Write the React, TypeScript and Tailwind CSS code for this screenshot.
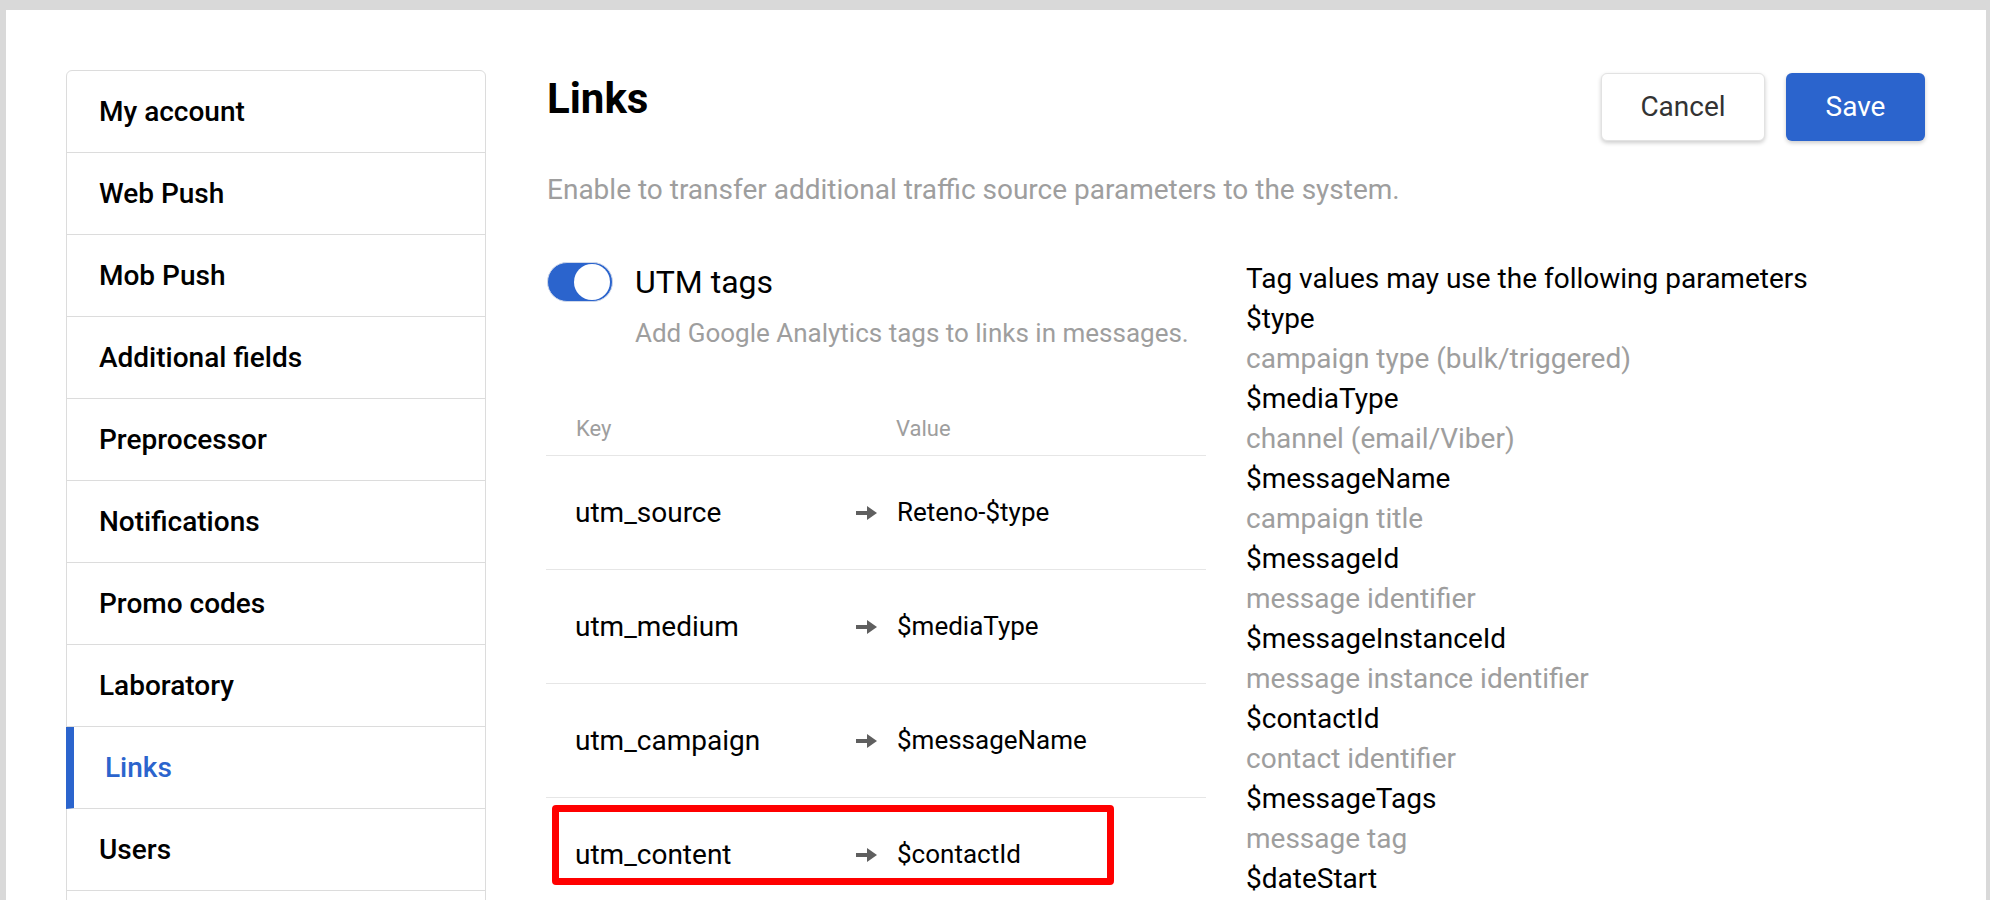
import React from "react";

const navItems = [
  "My account",
  "Web Push",
  "Mob Push",
  "Additional fields",
  "Preprocessor",
  "Notifications",
  "Promo codes",
  "Laboratory",
  "Links",
  "Users",
  "",
];

const rows = [
  { key: "utm_source", value: "Reteno-$type" },
  { key: "utm_medium", value: "$mediaType" },
  { key: "utm_campaign", value: "$messageName" },
  { key: "utm_content", value: "$contactId", marked: true },
];

const params: [string, string | null][] = [
  ["$type", "campaign type (bulk/triggered)"],
  ["$mediaType", "channel (email/Viber)"],
  ["$messageName", "campaign title"],
  ["$messageId", "message identifier"],
  ["$messageInstanceId", "message instance identifier"],
  ["$contactId", "contact identifier"],
  ["$messageTags", "message tag"],
  ["$dateStart", null],
];

function Arrow() {
  return (
    <svg width="22" height="16" viewBox="0 0 22 16" className="shrink-0">
      <rect x="0" y="6" width="12" height="4" fill="#5f5f5f" />
      <polygon points="11,1 21,8 11,15" fill="#5f5f5f" />
    </svg>
  );
}

export default function App() {
  return (
    <div
      className="h-[900px] w-[1990px] overflow-hidden bg-[#d9d9d9] pt-[10px] pl-[6px] pr-[4px]"
      style={{ fontFamily: "Roboto, 'Liberation Sans', sans-serif" }}
    >
      <div className="flex h-full bg-white pl-[60px] pt-[60px] pr-[61px]">
        {/* Sidebar */}
        <div className="w-[420px] shrink-0 self-start rounded-t-[6px] border border-[#dcdcdc]">
          {navItems.map((item, i) => {
            const active = item === "Links";
            return (
              <div
                key={i}
                className={
                  active
                    ? "-ml-px flex h-[82px] items-center border-b border-l-[8px] border-b-[#dcdcdc] border-l-[#2b64cd] pl-[31px] text-[28px] font-medium text-[#2b64cd]"
                    : "flex h-[82px] items-center border-b border-[#dcdcdc] pl-[32px] text-[28px] font-medium text-black"
                }
              >
                {item}
              </div>
            );
          })}
        </div>

        {/* Main */}
        <div className="ml-[61px] flex-1">
          <div className="flex items-start justify-between pt-[3px]">
            <h1 className="mt-[1px] text-[42px] font-bold leading-[50px] text-black">Links</h1>
            <div className="flex gap-[21px]">
              <button className="h-[68px] w-[164px] rounded-[6px] border border-[#e2e2e2] bg-white text-[28px] text-[#333] shadow-[0_2px_4px_rgba(0,0,0,0.2)]">
                Cancel
              </button>
              <button className="h-[68px] w-[139px] rounded-[6px] bg-[#2b64cd] text-[28px] text-white shadow-[0_2px_4px_rgba(0,0,0,0.2)]">
                Save
              </button>
            </div>
          </div>

          <p className="mt-[33px] text-[28px] leading-[32px] text-[#9e9e9e]">
            Enable to transfer additional traffic source parameters to the system.
          </p>

          <div className="mt-[53px] flex">
            {/* Left column */}
            <div className="-ml-px w-[660px] shrink-0">
              <div className="mt-[3px] flex items-center gap-[22px] pl-px">
                <div className="flex h-[40px] w-[66px] items-center justify-end rounded-full border border-[#cfd8ea] bg-[#2b64cd] pr-[2px]">
                  <div className="h-[36px] w-[36px] rounded-full bg-white" />
                </div>
                <span className="text-[32px] leading-[40px] text-black">UTM tags</span>
              </div>
              <p className="mt-[15px] pl-[89px] text-[26px] leading-[32px] text-[#9e9e9e]">
                Add Google Analytics tags to links in messages.
              </p>

              <div className="mt-[66px] flex h-[41px] border-b border-[#e6e6e6] pl-[30px] text-[22px] leading-[28px] text-[#9e9e9e]">
                <span className="w-[320px]">Key</span>
                <span>Value</span>
              </div>

              {rows.map((r) => (
                <div
                  key={r.key}
                  className="relative flex h-[114px] items-center border-b border-[#e6e6e6] pl-[29px] text-black"
                >
                  <span className="w-[281px] text-[28px]">{r.key}</span>
                  <Arrow />
                  <span className="ml-[19px] text-[26px]">{r.value}</span>
                  {r.marked && (
                    <div className="pointer-events-none absolute left-[6px] top-[7px] h-[80px] w-[562px] rounded-[4px] border-[7px] border-[#ff0000]" />
                  )}
                </div>
              ))}
            </div>

            {/* Right column */}
            <div className="ml-[40px] text-[28px] leading-[40px]">
              <div className="text-black">Tag values may use the following parameters</div>
              {params.map(([name, desc]) => (
                <React.Fragment key={name}>
                  <div className="text-black">{name}</div>
                  {desc && <div className="text-[#9e9e9e]">{desc}</div>}
                </React.Fragment>
              ))}
            </div>
          </div>
        </div>
      </div>
    </div>
  );
}
